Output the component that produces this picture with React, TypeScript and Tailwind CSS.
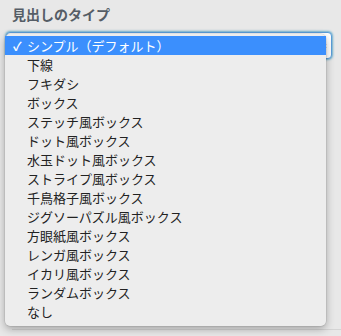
import React from 'react';

const options = [
  'シンプル（デフォルト）',
  '下線',
  'フキダシ',
  'ボックス',
  'ステッチ風ボックス',
  'ドット風ボックス',
  '水玉ドット風ボックス',
  'ストライプ風ボックス',
  '千鳥格子風ボックス',
  'ジグソーパズル風ボックス',
  '方眼紙風ボックス',
  'レンガ風ボックス',
  'イカリ風ボックス',
  'ランダムボックス',
  'なし',
];

export default function App() {
  const selected = 0;

  return (
    <div
      className="w-[341px] h-[336px] bg-[#e8e8e8] overflow-hidden"
      style={{ fontFamily: '"Noto Sans CJK JP", "Noto Sans", sans-serif' }}
    >
      <div className="pl-[12px] pt-[4px]">
        <h2 className="text-[14px] leading-[20px] font-bold text-[#555d66]">見出しのタイプ</h2>
      </div>

      {/* select box with open menu */}
      <div className="relative mt-[8px] ml-[6px] w-[326px]">
        <div className="h-[27px] rounded-[4px] border border-[#5b9dd9] bg-white shadow-[0_0_2px_1px_rgba(30,140,190,0.6)] flex items-center justify-end pr-[4px]">
          <svg width="6" height="10" viewBox="0 0 6 10" className="text-[#333]">
            <path d="M0.5 4 L3 1 L5.5 4 Z M0.5 6 L3 9 L5.5 6 Z" fill="currentColor" />
          </svg>
        </div>

        {/* dropdown menu */}
        <div className="absolute left-[-1px] top-[2px] w-[321px] bg-[#ededed] rounded-[5px] pt-[2px] pb-[5px] shadow-[0_3px_8px_rgba(0,0,0,0.3),0_0_0_0.5px_rgba(0,0,0,0.12)] z-10">
          {options.map((opt, i) => (
            <div
              key={opt}
              className={
                'h-[19px] flex items-center text-[13px] ' +
                (i === selected ? 'bg-[#3b8ffd] text-white' : 'text-[#222]')
              }
            >
              <span className="w-[22px] pl-[8px] text-[12px] font-bold">{i === selected ? '✓' : ''}</span>
              <span className="pl-[0px] leading-none">{opt}</span>
            </div>
          ))}
        </div>
      </div>

      <div className="mt-[270px] ml-[12px] border-t border-[#d4d4d4]" />
    </div>
  );
}
